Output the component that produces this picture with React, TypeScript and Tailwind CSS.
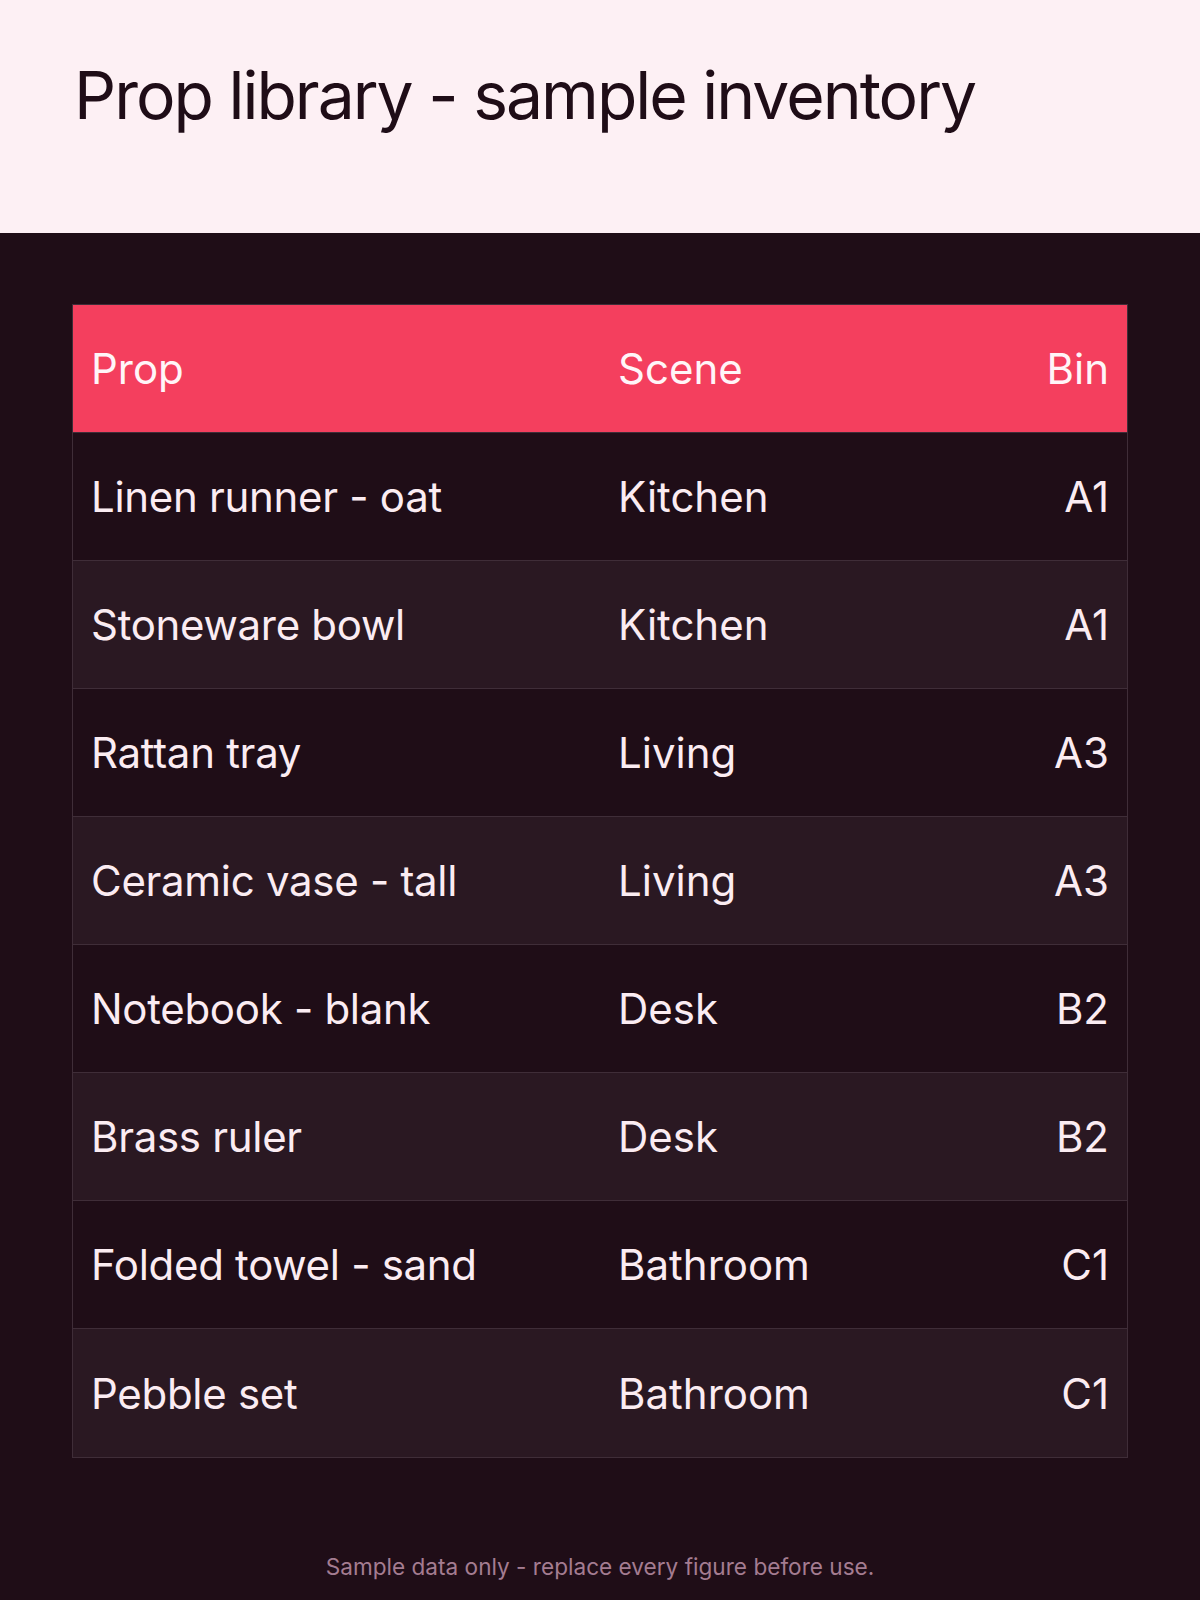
const rows = [
  { prop: "Linen runner - oat", scene: "Kitchen", bin: "A1" },
  { prop: "Stoneware bowl", scene: "Kitchen", bin: "A1" },
  { prop: "Rattan tray", scene: "Living", bin: "A3" },
  { prop: "Ceramic vase - tall", scene: "Living", bin: "A3" },
  { prop: "Notebook - blank", scene: "Desk", bin: "B2" },
  { prop: "Brass ruler", scene: "Desk", bin: "B2" },
  { prop: "Folded towel - sand", scene: "Bathroom", bin: "C1" },
  { prop: "Pebble set", scene: "Bathroom", bin: "C1" },
];

export default function App() {
  return (
    <div className="min-h-[1600px] w-[1200px] bg-[#1f0d17] font-['Inter',sans-serif]">
      {/* title band */}
      <header className="h-[233px] bg-[#fdf0f4] px-[74px] pt-[62px]">
        <h1 className="text-[66px] leading-none tracking-[-2px] text-[#1f0d17]">
          Prop library - sample inventory
        </h1>
      </header>

      <main className="px-[72px] pt-[71px]">
        <div className="border border-[#3f2d38]">
          <div className="grid h-[128px] grid-cols-[50%_1fr_auto] items-center border-b border-[#3f2d38] bg-[#f43f5e] text-[42px] text-[#fff5f8]">
            <span className="px-[18px]">Prop</span>
            <span className="px-[18px]">Scene</span>
            <span className="px-[18px] text-right">Bin</span>
          </div>
          {rows.map((r, i) => (
            <div
              key={i}
              className={
                "grid h-[128px] grid-cols-[50%_1fr_auto] items-center text-[42px] text-[#fbecf2] " +
                (i % 2 === 0 ? "bg-[#1f0d17] " : "bg-[#2a1822] ") +
                (i < rows.length - 1 ? "border-b border-[#3f2d38]" : "")
              }
            >
              <span className="px-[18px] tracking-[-0.3px]">{r.prop}</span>
              <span className="px-[18px]">{r.scene}</span>
              <span className="px-[18px] text-right">{r.bin}</span>
            </div>
          ))}
        </div>

        <p className="mt-[94px] text-center text-[22.6px] leading-[30px] text-[#a47c91]">
          Sample data only - replace every figure before use.
        </p>
      </main>
    </div>
  );
}
